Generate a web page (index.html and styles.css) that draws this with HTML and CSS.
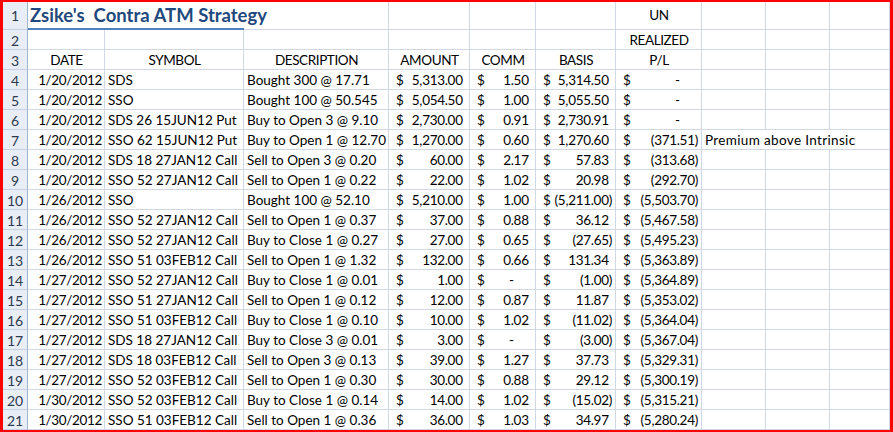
FILE: index.html
```html
<!DOCTYPE html>
<html>
<head>
<meta charset="utf-8">
<link rel="stylesheet" href="styles.css">
</head>
<body>
<div class="frame">
<div class="sheet">
  <div class="h r1">1</div><div class="c title r1">Zsike's&nbsp; Contra ATM Strategy</div><div class="c r1"></div><div class="c r1"></div><div class="c r1"></div><div class="c r1"></div><div class="c r1 ctr">UN</div><div class="c r1"></div><div class="c r1"></div><div class="c r1"></div>
  <div class="h">2</div><div class="c"></div><div class="c"></div><div class="c"></div><div class="c"></div><div class="c"></div><div class="c"></div><div class="c ctr">REALIZED</div><div class="c"></div><div class="c"></div><div class="c"></div>
  <div class="h">3</div><div class="c ctr">DATE</div><div class="c ctr">SYMBOL</div><div class="c ctr">DESCRIPTION</div><div class="c ctr">AMOUNT</div><div class="c ctr">COMM</div><div class="c ctr">BASIS</div><div class="c ctr">P/L</div><div class="c"></div><div class="c"></div><div class="c"></div>

  <div class="h">4</div><div class="c rt">1/20/2012</div><div class="c s">SDS</div><div class="c d">Bought 300 @ 17.71</div><div class="c acc"><span>$</span><span>5,313.00<i>)</i></span></div><div class="c acc"><span>$</span><span>1.50<i>)</i></span></div><div class="c acc"><span>$</span><span>5,314.50<i>)</i></span></div><div class="c acc"><span>$</span><span>-<i>00)</i></span></div><div class="c"></div><div class="c"></div><div class="c"></div>
  <div class="h">5</div><div class="c rt">1/20/2012</div><div class="c s">SSO</div><div class="c d">Bought 100 @ 50.545</div><div class="c acc"><span>$</span><span>5,054.50<i>)</i></span></div><div class="c acc"><span>$</span><span>1.00<i>)</i></span></div><div class="c acc"><span>$</span><span>5,055.50<i>)</i></span></div><div class="c acc"><span>$</span><span>-<i>00)</i></span></div><div class="c"></div><div class="c"></div><div class="c"></div>
  <div class="h">6</div><div class="c rt">1/20/2012</div><div class="c s">SDS 26 15JUN12 Put</div><div class="c d">Buy to Open 3 @ 9.10</div><div class="c acc"><span>$</span><span>2,730.00<i>)</i></span></div><div class="c acc"><span>$</span><span>0.91<i>)</i></span></div><div class="c acc"><span>$</span><span>2,730.91<i>)</i></span></div><div class="c acc"><span>$</span><span>-<i>00)</i></span></div><div class="c"></div><div class="c"></div><div class="c"></div>
  <div class="h">7</div><div class="c rt">1/20/2012</div><div class="c s">SSO 62 15JUN12 Put</div><div class="c d">Buy to Open 1 @ 12.70</div><div class="c acc"><span>$</span><span>1,270.00<i>)</i></span></div><div class="c acc"><span>$</span><span>0.60<i>)</i></span></div><div class="c acc"><span>$</span><span>1,270.60<i>)</i></span></div><div class="c acc"><span>$</span><span>(371.51)</span></div><div class="c span3">Premium above Intrinsic</div>
  <div class="h">8</div><div class="c rt">1/20/2012</div><div class="c s">SDS 18 27JAN12 Call</div><div class="c d">Sell to Open 3 @ 0.20</div><div class="c acc"><span>$</span><span>60.00<i>)</i></span></div><div class="c acc"><span>$</span><span>2.17<i>)</i></span></div><div class="c acc"><span>$</span><span>57.83<i>)</i></span></div><div class="c acc"><span>$</span><span>(313.68)</span></div><div class="c"></div><div class="c"></div><div class="c"></div>
  <div class="h">9</div><div class="c rt">1/20/2012</div><div class="c s">SSO 52 27JAN12 Call</div><div class="c d">Sell to Open 1 @ 0.22</div><div class="c acc"><span>$</span><span>22.00<i>)</i></span></div><div class="c acc"><span>$</span><span>1.02<i>)</i></span></div><div class="c acc"><span>$</span><span>20.98<i>)</i></span></div><div class="c acc"><span>$</span><span>(292.70)</span></div><div class="c"></div><div class="c"></div><div class="c"></div>
  <div class="h">10</div><div class="c rt">1/26/2012</div><div class="c s">SSO</div><div class="c d">Bought 100 @ 52.10</div><div class="c acc"><span>$</span><span>5,210.00<i>)</i></span></div><div class="c acc"><span>$</span><span>1.00<i>)</i></span></div><div class="c acc"><span>$</span><span>(5,211.00)</span></div><div class="c acc"><span>$</span><span>(5,503.70)</span></div><div class="c"></div><div class="c"></div><div class="c"></div>
  <div class="h">11</div><div class="c rt">1/26/2012</div><div class="c s">SSO 52 27JAN12 Call</div><div class="c d">Sell to Open 1 @ 0.37</div><div class="c acc"><span>$</span><span>37.00<i>)</i></span></div><div class="c acc"><span>$</span><span>0.88<i>)</i></span></div><div class="c acc"><span>$</span><span>36.12<i>)</i></span></div><div class="c acc"><span>$</span><span>(5,467.58)</span></div><div class="c"></div><div class="c"></div><div class="c"></div>
  <div class="h">12</div><div class="c rt">1/26/2012</div><div class="c s">SSO 52 27JAN12 Call</div><div class="c d">Buy to Close 1 @ 0.27</div><div class="c acc"><span>$</span><span>27.00<i>)</i></span></div><div class="c acc"><span>$</span><span>0.65<i>)</i></span></div><div class="c acc"><span>$</span><span>(27.65)</span></div><div class="c acc"><span>$</span><span>(5,495.23)</span></div><div class="c"></div><div class="c"></div><div class="c"></div>
  <div class="h">13</div><div class="c rt">1/26/2012</div><div class="c s">SSO 51 03FEB12 Call</div><div class="c d">Sell to Open 1 @ 1.32</div><div class="c acc"><span>$</span><span>132.00<i>)</i></span></div><div class="c acc"><span>$</span><span>0.66<i>)</i></span></div><div class="c acc"><span>$</span><span>131.34<i>)</i></span></div><div class="c acc"><span>$</span><span>(5,363.89)</span></div><div class="c"></div><div class="c"></div><div class="c"></div>
  <div class="h">14</div><div class="c rt">1/27/2012</div><div class="c s">SSO 52 27JAN12 Call</div><div class="c d">Buy to Close 1 @ 0.01</div><div class="c acc"><span>$</span><span>1.00<i>)</i></span></div><div class="c acc"><span>$</span><span>-<i>00)</i></span></div><div class="c acc"><span>$</span><span>(1.00)</span></div><div class="c acc"><span>$</span><span>(5,364.89)</span></div><div class="c"></div><div class="c"></div><div class="c"></div>
  <div class="h">15</div><div class="c rt">1/27/2012</div><div class="c s">SSO 51 27JAN12 Call</div><div class="c d">Sell to Open 1 @ 0.12</div><div class="c acc"><span>$</span><span>12.00<i>)</i></span></div><div class="c acc"><span>$</span><span>0.87<i>)</i></span></div><div class="c acc"><span>$</span><span>11.87<i>)</i></span></div><div class="c acc"><span>$</span><span>(5,353.02)</span></div><div class="c"></div><div class="c"></div><div class="c"></div>
  <div class="h">16</div><div class="c rt">1/27/2012</div><div class="c s">SSO 51 03FEB12 Call</div><div class="c d">Buy to Close 1 @ 0.10</div><div class="c acc"><span>$</span><span>10.00<i>)</i></span></div><div class="c acc"><span>$</span><span>1.02<i>)</i></span></div><div class="c acc"><span>$</span><span>(11.02)</span></div><div class="c acc"><span>$</span><span>(5,364.04)</span></div><div class="c"></div><div class="c"></div><div class="c"></div>
  <div class="h">17</div><div class="c rt">1/27/2012</div><div class="c s">SDS 18 27JAN12 Call</div><div class="c d">Buy to Close 3 @ 0.01</div><div class="c acc"><span>$</span><span>3.00<i>)</i></span></div><div class="c acc"><span>$</span><span>-<i>00)</i></span></div><div class="c acc"><span>$</span><span>(3.00)</span></div><div class="c acc"><span>$</span><span>(5,367.04)</span></div><div class="c"></div><div class="c"></div><div class="c"></div>
  <div class="h">18</div><div class="c rt">1/27/2012</div><div class="c s">SDS 18 03FEB12 Call</div><div class="c d">Sell to Open 3 @ 0.13</div><div class="c acc"><span>$</span><span>39.00<i>)</i></span></div><div class="c acc"><span>$</span><span>1.27<i>)</i></span></div><div class="c acc"><span>$</span><span>37.73<i>)</i></span></div><div class="c acc"><span>$</span><span>(5,329.31)</span></div><div class="c"></div><div class="c"></div><div class="c"></div>
  <div class="h">19</div><div class="c rt">1/27/2012</div><div class="c s">SSO 52 03FEB12 Call</div><div class="c d">Sell to Open 1 @ 0.30</div><div class="c acc"><span>$</span><span>30.00<i>)</i></span></div><div class="c acc"><span>$</span><span>0.88<i>)</i></span></div><div class="c acc"><span>$</span><span>29.12<i>)</i></span></div><div class="c acc"><span>$</span><span>(5,300.19)</span></div><div class="c"></div><div class="c"></div><div class="c"></div>
  <div class="h">20</div><div class="c rt">1/30/2012</div><div class="c s">SSO 52 03FEB12 Call</div><div class="c d">Buy to Close 1 @ 0.14</div><div class="c acc"><span>$</span><span>14.00<i>)</i></span></div><div class="c acc"><span>$</span><span>1.02<i>)</i></span></div><div class="c acc"><span>$</span><span>(15.02)</span></div><div class="c acc"><span>$</span><span>(5,315.21)</span></div><div class="c"></div><div class="c"></div><div class="c"></div>
  <div class="h">21</div><div class="c rt">1/30/2012</div><div class="c s">SSO 51 03FEB12 Call</div><div class="c d">Sell to Open 1 @ 0.36</div><div class="c acc"><span>$</span><span>36.00<i>)</i></span></div><div class="c acc"><span>$</span><span>1.03<i>)</i></span></div><div class="c acc"><span>$</span><span>34.97<i>)</i></span></div><div class="c acc"><span>$</span><span>(5,280.24)</span></div><div class="c"></div><div class="c"></div><div class="c"></div>
</div>
</div>
</body>
</html>
```
FILE: styles.css
```css
html, body {
  margin: 0;
  padding: 0;
  background: #ffffff;
}
.frame {
  width: 893px;
  height: 432px;
  box-sizing: border-box;
  border-style: solid;
  border-color: #ff0000;
  border-width: 2px 3px 2px 3px;
  overflow: hidden;
  background: #ffffff;
}
.sheet {
  display: grid;
  grid-template-columns: 25px 77px 139px 145px 81px 66px 80px 86px 64px 64px 60px;
  grid-template-rows: 28px;
  grid-auto-rows: 20px;
  font-family: Lato, "Open Sans", sans-serif;
  font-size: 13.5px;
  color: #000000;
}
.c, .h {
  box-sizing: border-box;
  border-right: 1px solid #d0d7e5;
  border-bottom: 1px solid #d0d7e5;
  white-space: nowrap;
  line-height: 19px;
  padding: 1px 2px 0 3px;
  overflow: visible;
}
.h {
  background: #e9eef6;
  border-right-color: #9eb6ce;
  border-bottom-color: #c5d1e0;
  color: #2c3a4f;
  text-align: center;
  padding: 1px 0 0 0;
  font-size: 14px;
}
.r1 {
  line-height: 27px;
  padding-top: 0;
}
.h.r1 { padding-top: 0; }
.title {
  grid-column: span 2;
  border-right: none;
  border-bottom: 2px solid #4f81bd;
  font-size: 18.5px;
  font-weight: bold;
  color: #1f497d;
  padding-left: 2px;
  position: relative;
  z-index: 1;
}
.ctr {
  text-align: center;
  letter-spacing: -0.4px;
}
.rt {
  text-align: right;
  letter-spacing: -0.35px;
  padding-right: 2px;
}
.s { letter-spacing: 0; }
.d { letter-spacing: 0; }
.acc {
  display: flex;
  justify-content: space-between;
  padding-left: 7px;
  padding-right: 3px;
  letter-spacing: -0.3px;
}
.acc i {
  font-style: normal;
  visibility: hidden;
}
.span3 {
  grid-column: span 3;
  letter-spacing: 0.35px;
}
```
